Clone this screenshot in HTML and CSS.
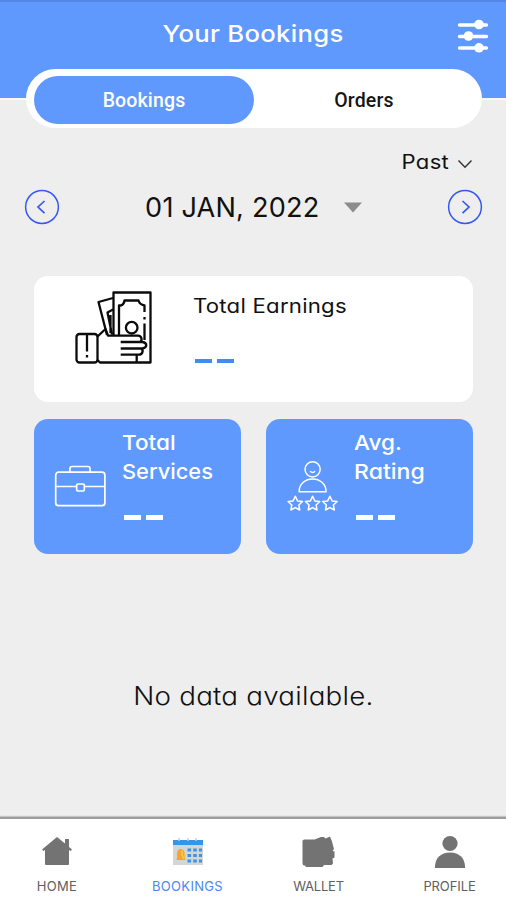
FILE: index.html
```html
<!DOCTYPE html>
<html lang="en">
<head>
<meta charset="utf-8">
<title>Your Bookings</title>
<link rel="stylesheet" href="styles.css">
</head>
<body>
<div class="app">
  <header class="header">
    <h1 class="title">Your Bookings</h1>
    <svg class="filter" width="32" height="36" viewBox="0 0 32 36" fill="#fff" stroke="#fff" stroke-width="3.4" stroke-linecap="round"><path d="M2.500 8h27M2.500 19.500h27M2.500 31h27"/><g stroke="none"><circle cx="22" cy="7.500" r="4.800"/><circle cx="11.500" cy="19" r="4.800"/><circle cx="22" cy="30.800" r="4.800"/></g></svg>
  </header>
  <nav class="tabs">
    <span class="tab tab-active">Bookings</span>
    <span class="tab">Orders</span>
  </nav>
  <main class="main">
    <div class="period"><span class="period-text">Past</span>
      <svg class="chevron" width="16" height="10" viewBox="0 0 16 10" fill="none" stroke="#333" stroke-width="1.400"><path d="M1.500 1.500 8 8.200 14.500 1.500"/></svg>
    </div>
    <div class="date-row">
      <svg width="36" height="36" viewBox="0 0 36 36" fill="none" stroke="#3558f0" stroke-width="1.500"><circle cx="18" cy="18" r="16.400"/><path d="M20.500 12 14 18l6.500 6.200" stroke-width="1.700"/></svg>
      <div class="date"><span class="date-text">01 JAN, 2022</span>
        <svg width="18" height="11" viewBox="0 0 18 11"><path d="M0 .5h18L9 10.500z" fill="#8c8c8c"/></svg>
      </div>
      <svg width="36" height="36" viewBox="0 0 36 36" fill="none" stroke="#3558f0" stroke-width="1.500"><circle cx="18" cy="18" r="16.400"/><path d="M15.500 12l6.500 6-6.500 6.200" stroke-width="1.700"/></svg>
    </div>
    <section class="card earnings">
      <svg class="money" width="78" height="76" viewBox="0 0 78 76" fill="none" stroke="#0b0b0b" stroke-width="2.300" stroke-linejoin="round">
        <path d="M38.500 44V1.500h37V71.500H25L22.500 69"/>
        <path d="M38 7 23.500 11 32 44M38 18.500l-5.500 3 4.500 22M35.500 24v18"/>
        <path d="M44 44V14.500h2q3-1 3.500-5h14q1 4 6 5v6.500M69.500 26v2.500M69.500 32.500V49"/>
        <circle cx="56.700" cy="36.700" r="5.800"/>
        <path d="M22.500 45.500 30.500 38 33 44.700h30c4 0 4.500 5 2 6.300h2.500c5 1 5 5.500 0 6.500H66c3 1.500 1.500 6.200-2 6.200H45.700M45.700 51H66M45.700 57.500H66M61.700 64v7"/>
        <rect x="1.500" y="43" width="21" height="28.500" rx="3"/><path d="M12 43V60.500M12 64v2.500"/>
      </svg>
      <div class="stat"><div class="earn-label">Total Earnings</div><div class="dashes dashes-blue"><i></i><i></i></div></div>
    </section>
    <div class="pair">
      <section class="card blue">
        <svg class="tile-icon" width="52" height="44" viewBox="0 0 52 44" fill="none" stroke="#fff" stroke-width="1.700" stroke-linejoin="round"><rect x="1.700" y="7.200" width="49.200" height="33.500" rx="3"/><path d="M16 7V3.500q0-2 2-2h16q2 0 2 2V7M2 21.500h20.500M30.500 21.500h20"/><rect x="22.700" y="19" width="7.600" height="7" rx="1.200"/></svg>
        <div class="stat"><div class="tile-label"><span class="l-total">Total</span><br><span class="l-services">Services</span></div><div class="dashes dashes-white"><i></i><i></i></div></div>
      </section>
      <section class="card blue">
        <svg class="tile-icon rating" width="52" height="54" viewBox="0 0 52 54" fill="none" stroke="#fff" stroke-width="1.500" stroke-linejoin="round"><g transform="translate(.6 -1.200)"><circle cx="26" cy="10.500" r="7.600"/><path d="M23.500 12.500q2.500 2.500 5 0M12.500 33c0-17 27-17 27 0zM8.700 37.500l2.200 4.600 5 .6-3.700 3.500.9 5-4.400-2.400-4.400 2.400.9-5-3.700-3.500 5-.6zM26 37.500l2.200 4.600 5 .6-3.700 3.500.9 5-4.400-2.400-4.400 2.400.9-5-3.700-3.500 5-.6zM43.300 37.500l2.200 4.600 5 .6-3.700 3.500.9 5-4.400-2.400-4.400 2.400.9-5-3.700-3.500 5-.6z"/></g></svg>
        <div class="stat"><div class="tile-label"><span class="l-avg">Avg.</span><br><span class="l-rating">Rating</span></div><div class="dashes dashes-white"><i></i><i></i></div></div>
      </section>
    </div>
    <p class="empty"><span class="empty-text">No data available.</span></p>
  </main>
  <nav class="bottom">
    <div class="item"><svg width="32" height="34" viewBox="0 0 32 34" fill="#737373"><path d="M16 3 1 15.500 2.500 17 4 16v14q0 1 1 1h22q1 0 1-1V16l1.500 1L31 15.500 28 13V5h-4v4.500z"/></svg><span class="n-home">HOME</span></div>
    <div class="item active"><svg width="32" height="34" viewBox="0 0 32 34"><path d="M1 6h30v25H1z" fill="#d3d6d8"/><path d="M1 6h30v5H1z" fill="#3296ea"/><path d="M7 4v3M16 4v3M24 4v3" stroke="#c5ced6" stroke-width="1.500"/><path d="M4.500 26q1-3 .5-6 0-5 4-5 4 1 3.500 5 0 3 1 6z" fill="#f5a52b"/><path d="M9 17q2 1 1 4l2 4" stroke="#f9c94d" stroke-width="1.500" fill="none"/><path d="M15.500 16H30M15.500 21.500H30M15.500 27H30" stroke="#3d94df" stroke-width="2.800" stroke-dasharray="3.600 2.100"/></svg><span class="n-book">BOOKINGS</span></div>
    <div class="item"><svg width="34" height="34" viewBox="0 0 34 34" fill="#737373"><path d="M.5 7q0-1.500 2-1.500h10L19 3h3l1.500 1.500L28 2.500l2 5 1 4 1 3.500-1.500 2 2 .5v6l-2 1 .5 5-1.500 1.500H22l-1.500 2H4L3 31.500H2Q.5 31 .5 29z"/></svg><span class="n-wallet">WALLET</span></div>
    <div class="item"><svg width="32" height="34" viewBox="0 0 32 34" fill="#737373"><circle cx="16" cy="9.500" r="7.600"/><path d="M1 34V32Q2 19 16 18.500 30 19 31 32v2z"/></svg><span class="n-profile">PROFILE</span></div>
  </nav>
</div>
</body>
</html>
```
FILE: styles.css
```css
* { box-sizing: border-box; }
body { margin: 0; background: #eee; color: #111; font-family: Inter, "Open Sans", sans-serif; font-feature-settings: "cv11" 1; }
svg { display: block; flex: none; }
.app { width: 506px; height: 900px; display: flex; flex-direction: column; overflow: hidden; }
.header { height: 100px; flex: none; background: #5f99fd; border-top: 2px solid #5386e5; border-bottom: 2px solid #f8f8fa; display: grid; grid-template-columns: 60px 1fr 60px; }
.title { grid-column: 2; margin: 0; height: 63px; line-height: 64px; text-align: center; color: #fff; font-size: 23px; font-weight: 500; letter-spacing: .3px; white-space: nowrap; transform: scaleX(1.113); }
.filter { margin: 15px 0 0 11px; }
.tabs { flex: none; margin: -31px 24px 0 26px; height: 59px; border-radius: 30px; background: #fff; padding: 7px 8px 5px; display: flex; }
.tab { flex: 1; height: 48px; border-radius: 24px; text-align: center; font: 500 19.500px/50px Roboto, sans-serif; letter-spacing: .15px; color: #151515; }
.tab-active { background: #5f99fd; color: #fff; }
.main { flex: 1; padding: 0 33px 0 34px; }
.period { height: 40px; margin-top: 14px; display: flex; justify-content: flex-end; align-items: center; gap: 8px; }
.period-text { font-size: 19.500px; line-height: 40px; letter-spacing: .3px; transform: scaleX(1.13); transform-origin: right; }
.chevron { margin-top: 3px; }
.date-row { display: flex; margin: 7px -10px 0; height: 36px; align-items: center; justify-content: space-between; }
.date { display: flex; align-items: center; gap: 26px; padding-left: 2px; }
.date-text { font-size: 26.500px; letter-spacing: .2px; line-height: 36px; white-space: nowrap; transform: scaleX(1.022); }
.card { border-radius: 14px; display: flex; }
.earnings { background: #fff; height: 126px; margin-top: 51px; padding: 15px 0 0 41px; }
.earnings .stat { margin-left: 40px; }
.earn-label { font-size: 19.500px; line-height: 31px; letter-spacing: .2px; white-space: nowrap; transform: scaleX(1.138); transform-origin: left; }
.dashes { display: flex; gap: 5px; }
.dashes i { width: 17px; height: 4px; }
.dashes-blue { margin: 37px 0 0 2px; }
.dashes-blue i { background: #438bef; }
.dashes-white { margin: 29px 0 0 2px; }
.dashes-white i { height: 5px; background: #fff; }
.pair { display: grid; grid-template-columns: 207px 207px; justify-content: space-between; margin-top: 17px; }
.blue { height: 135px; background: #5f99fd; color: #fff; padding: 9px 0 0 20px; }
.tile-icon { margin-top: 37px; }
.rating { margin-top: 32px; }
.blue .stat { margin-left: 16px; }
.tile-label { font-size: 20.500px; font-weight: 500; line-height: 29px; white-space: nowrap; }
.tile-label span { display: inline-block; transform-origin: left; }
.l-total { transform: scaleX(1.1); }
.l-services { transform: scaleX(1.065); }
.l-avg { transform: scaleX(1.1); }
.l-rating { transform: scaleX(1.125); }
.empty { margin: 122px 0 0; text-align: center; line-height: 40px; font-size: 25.500px; font-weight: 300; letter-spacing: .2px; }
.empty-text { display: inline-block; transform: scaleX(1.088); }
.bottom { height: 83px; flex: none; background: #fff; border-top: 2px solid #9c9c9c; box-shadow: 0 -1px 1px #c4c4c4; display: grid; grid-template-columns: 114px 147px 115px 147px; }
.item { display: flex; flex-direction: column; align-items: center; padding-top: 15px; font-size: 13px; line-height: 36px; color: #606060; }
.n-home { letter-spacing: .3px; }
.n-book { letter-spacing: .3px; }
.n-wallet { letter-spacing: -.2px; }
.n-profile { letter-spacing: -.1px; }
.active { color: #4b86f5; }
```
